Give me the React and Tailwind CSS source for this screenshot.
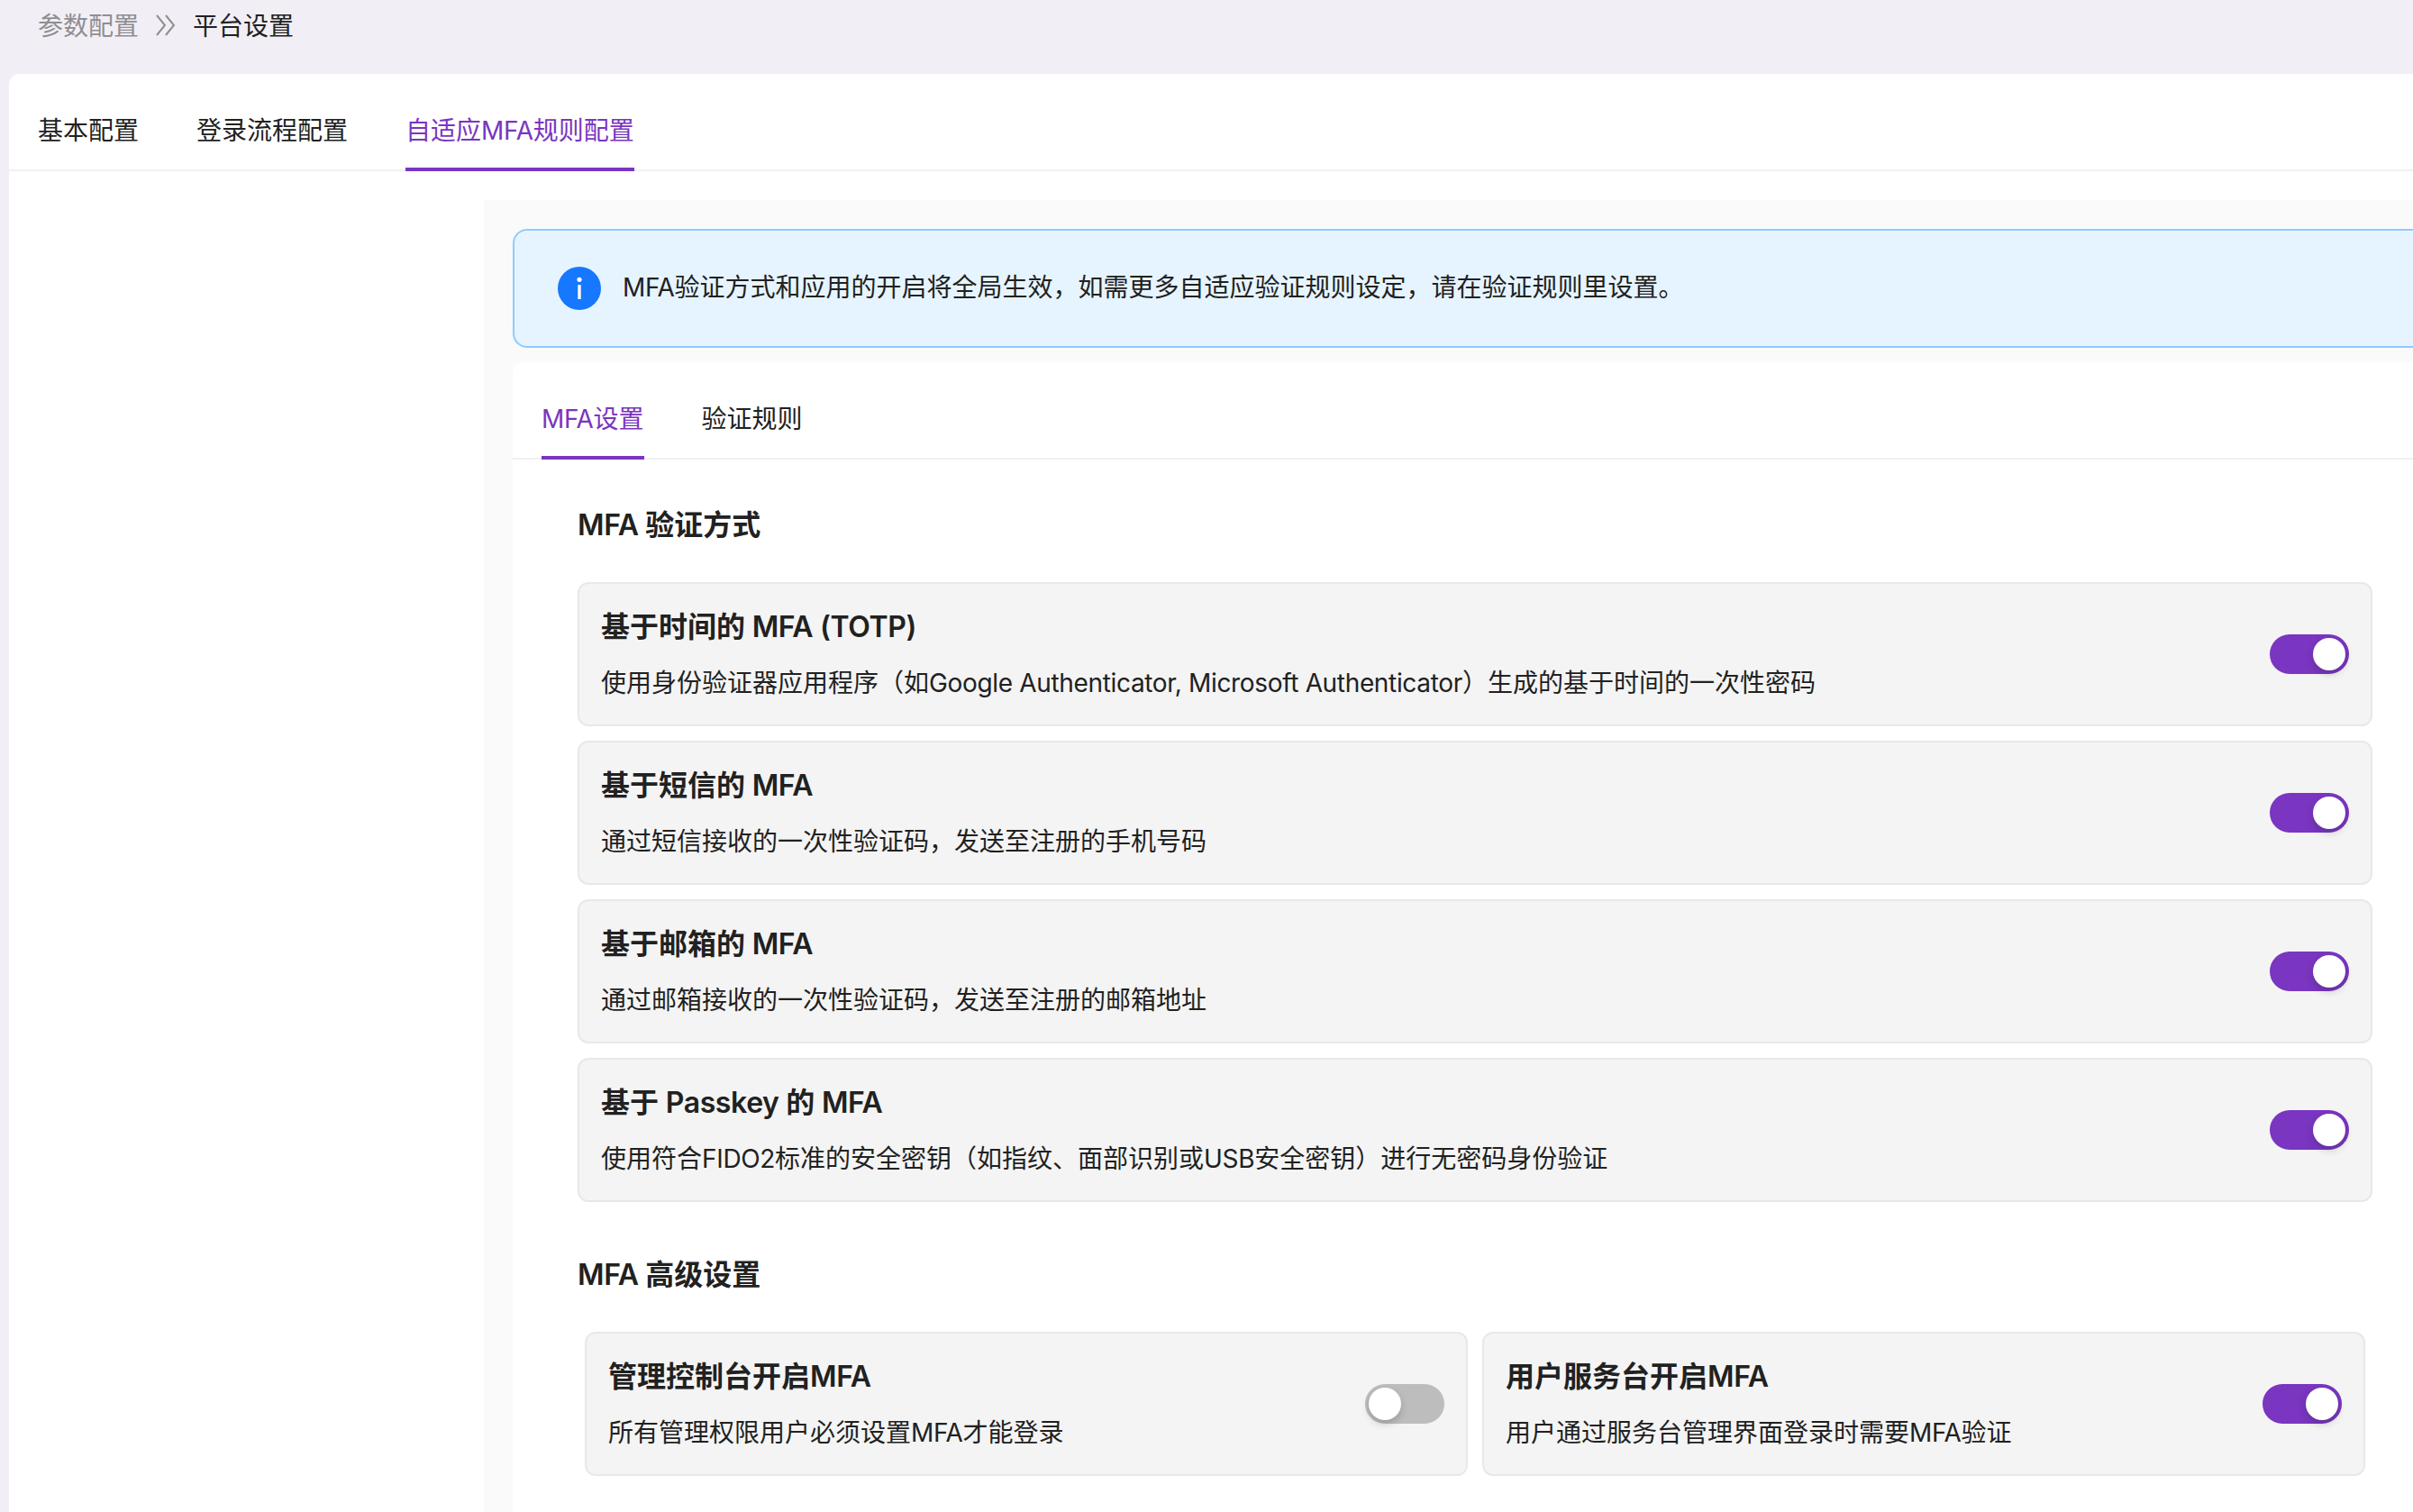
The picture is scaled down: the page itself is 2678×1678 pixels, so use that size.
import React, { useState } from "react";

const mfaMethods = [
  {
    key: "totp",
    title: "基于时间的 MFA (TOTP)",
    desc: "使用身份验证器应用程序（如Google Authenticator, Microsoft Authenticator）生成的基于时间的一次性密码",
  },
  {
    key: "sms",
    title: "基于短信的 MFA",
    desc: "通过短信接收的一次性验证码，发送至注册的手机号码",
  },
  {
    key: "email",
    title: "基于邮箱的 MFA",
    desc: "通过邮箱接收的一次性验证码，发送至注册的邮箱地址",
  },
  {
    key: "passkey",
    title: "基于 Passkey 的 MFA",
    desc: "使用符合FIDO2标准的安全密钥（如指纹、面部识别或USB安全密钥）进行无密码身份验证",
  },
];

const advancedSettings = [
  {
    key: "console",
    title: "管理控制台开启MFA",
    desc: "所有管理权限用户必须设置MFA才能登录",
  },
  {
    key: "portal",
    title: "用户服务台开启MFA",
    desc: "用户通过服务台管理界面登录时需要MFA验证",
  },
];

// Latin runs are tracked a little tighter than the Chinese around them
const Text = ({ children }) =>
  children.split(/([\x20-\x7e]+)/).map((part, i) =>
    i % 2 ? (
      <span key={i} className="tracking-[-0.012em]">
        {part}
      </span>
    ) : (
      part
    )
  );

const Tabs = ({ items, active, onChange }) => (
  <div className="flex gap-16 border-b-2 border-[#f0f0f0] px-8 pt-4">
    {items.map((item) => (
      <button
        key={item}
        onClick={() => onChange(item)}
        className={`-mb-0.5 cursor-pointer border-b-4 pt-[25px] pb-[19px] leading-[44px] ${
          item === active
            ? "border-[#7a35c1] text-[#7a35c1]"
            : "border-transparent"
        }`}
      >
        <Text>{item}</Text>
      </button>
    ))}
  </div>
);

const Switch = ({ checked, onChange }) => (
  <button
    role="switch"
    aria-checked={checked}
    onClick={() => onChange(!checked)}
    className={`flex h-11 w-[88px] shrink-0 cursor-pointer items-center rounded-full p-1 ${
      checked ? "justify-end bg-[#7a35c1]" : "justify-start bg-[#bdbdbd]"
    }`}
  >
    <span className="size-9 rounded-full bg-white shadow-[0_4px_8px_rgba(0,35,11,0.2)]" />
  </button>
);

const SettingCard = ({ title, desc, checked, onChange }) => (
  <div className="flex h-40 items-center justify-between rounded-xl border-2 border-[#e8e8e8] bg-[#f4f4f4] px-6">
    <div>
      <h4 className="mb-4 text-[32px] leading-[48px] font-semibold">
        <Text>{title}</Text>
      </h4>
      <p className="leading-[44px]">
        <Text>{desc}</Text>
      </p>
    </div>
    <Switch checked={checked} onChange={onChange} />
  </div>
);

const App = () => {
  const [tab, setTab] = useState("自适应MFA规则配置");
  const [subTab, setSubTab] = useState("MFA设置");
  const [enabled, setEnabled] = useState({
    totp: true,
    sms: true,
    email: true,
    passkey: true,
    console: false,
    portal: true,
  });

  const toggle = (key) => (value) => setEnabled({ ...enabled, [key]: value });

  return (
    <div
      lang="zh-CN"
      className="flex h-screen flex-col overflow-hidden bg-[#f1eff5] pl-2.5 font-['Inter','Noto_Sans_CJK_SC',sans-serif] text-[28px] text-[#212121]"
    >
      <nav className="flex h-[82px] shrink-0 items-start pt-[7px] pl-8 leading-[44px]">
        <span className="text-[#8f8e92]">参数配置</span>
        <svg
          className="mx-[18px] mt-2 h-[26px] w-6"
          viewBox="0 0 24 26"
          fill="none"
          stroke="#8f8e92"
          strokeWidth="2"
        >
          <path d="M2 2l9 11L2 24M12 2l9 11L12 24" />
        </svg>
        <span>平台设置</span>
      </nav>

      <main className="flex min-h-0 flex-1 flex-col rounded-tl-xl bg-white">
        <Tabs
          items={["基本配置", "登录流程配置", "自适应MFA规则配置"]}
          active={tab}
          onChange={setTab}
        />

        <div className="mt-8 ml-[527px] flex min-h-0 flex-1 flex-col bg-[#fafafa] pt-8 pl-8">
          <div className="flex h-[132px] shrink-0 items-center gap-6 rounded-l-2xl border-2 border-r-0 border-[#91caff] bg-[#e6f4ff] pl-12">
            <svg className="size-12" viewBox="0 0 48 48">
              <circle cx="24" cy="24" r="24" fill="#1677ff" />
              <circle cx="24" cy="14.3" r="2.6" fill="#fff" />
              <rect x="22.3" y="20" width="3.4" height="16" rx="0.6" fill="#fff" />
            </svg>
            <p className="pb-0.5">
              <Text>
                MFA验证方式和应用的开启将全局生效，如需更多自适应验证规则设定，请在验证规则里设置。
              </Text>
            </p>
          </div>

          <div className="mt-4 flex-1 rounded-tl-xl bg-white">
            <Tabs
              items={["MFA设置", "验证规则"]}
              active={subTab}
              onChange={setSubTab}
            />

            <div className="pt-[49px] pr-[45px] pl-[72px]">
              <h3 className="mb-[39px] text-[32px] leading-[48px] font-semibold">
                <Text>MFA 验证方式</Text>
              </h3>
              <div className="flex flex-col gap-4">
                {mfaMethods.map((m) => (
                  <SettingCard
                    key={m.key}
                    title={m.title}
                    desc={m.desc}
                    checked={enabled[m.key]}
                    onChange={toggle(m.key)}
                  />
                ))}
              </div>

              <h3 className="mt-[57px] mb-[39px] text-[32px] leading-[48px] font-semibold">
                <Text>MFA 高级设置</Text>
              </h3>
              <div className="grid grid-cols-2 gap-4 px-2">
                {advancedSettings.map((s) => (
                  <SettingCard
                    key={s.key}
                    title={s.title}
                    desc={s.desc}
                    checked={enabled[s.key]}
                    onChange={toggle(s.key)}
                  />
                ))}
              </div>
            </div>
          </div>
        </div>
      </main>
    </div>
  );
};

export default App;
